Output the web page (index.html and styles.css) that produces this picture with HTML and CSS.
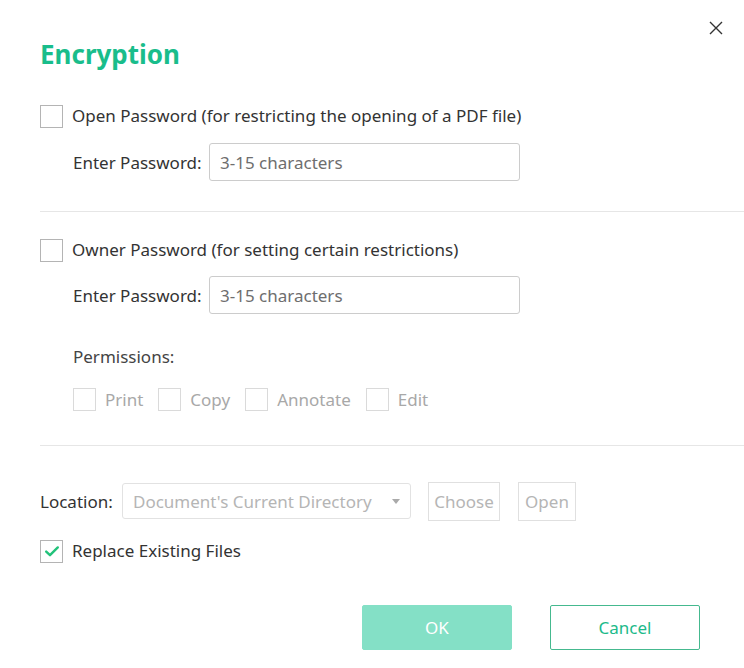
FILE: index.html
```html
<!DOCTYPE html>
<html lang="en">
<head>
<meta charset="utf-8">
<title>Encryption</title>
<link rel="stylesheet" href="styles.css">
</head>
<body>
<div class="dialog">
  <button class="close" aria-label="Close">
    <svg width="14" height="14" viewBox="0 0 14 14"><path d="M1 1L13 13M13 1L1 13" stroke="#333" stroke-width="1.4" fill="none"/></svg>
  </button>
  <h1 class="title">Encryption</h1>

  <section class="section sec-open">
    <label class="check-row">
      <span class="box"></span>
      <span class="check-text">Open Password (for restricting the opening of a PDF file)</span>
    </label>
    <div class="field-row">
      <span class="field-label">Enter Password:</span>
      <div class="input">3-15 characters</div>
    </div>
  </section>

  <div class="divider div-1"></div>

  <section class="section sec-owner">
    <label class="check-row">
      <span class="box"></span>
      <span class="check-text">Owner Password (for setting certain restrictions)</span>
    </label>
    <div class="field-row">
      <span class="field-label">Enter Password:</span>
      <div class="input">3-15 characters</div>
    </div>
    <div class="perm-label">Permissions:</div>
    <div class="perm-row">
      <span class="perm"><span class="box disabled"></span><span>Print</span></span>
      <span class="perm"><span class="box disabled"></span><span>Copy</span></span>
      <span class="perm"><span class="box disabled"></span><span>Annotate</span></span>
      <span class="perm"><span class="box disabled"></span><span>Edit</span></span>
    </div>
  </section>

  <div class="divider div-2"></div>

  <div class="location-row">
    <span class="loc-label">Location:</span>
    <div class="select">
      <span>Document's Current Directory</span>
      <svg class="caret" width="8" height="5" viewBox="0 0 8 5"><path d="M0 0H8L4 5Z" fill="#aaa"/></svg>
    </div>
    <span class="btn-small choose">Choose</span>
    <span class="btn-small open">Open</span>
  </div>

  <label class="check-row replace">
    <span class="box checked">
      <svg width="16" height="13" viewBox="0 0 16 13"><path d="M2.2 6.6L6 10.2L13.8 2.4" stroke="#22c27a" stroke-width="2.4" fill="none" stroke-linecap="round" stroke-linejoin="round"/></svg>
    </span>
    <span class="check-text">Replace Existing Files</span>
  </label>

  <div class="actions">
    <button class="btn ok">OK</button>
    <button class="btn cancel">Cancel</button>
  </div>
</div>
</body>
</html>
```

FILE: styles.css
```css
* { box-sizing: border-box; }
html, body {
  margin: 0;
  padding: 0;
  background: #ffffff;
}
body {
  font-family: "Noto Sans", "Open Sans", sans-serif;
  font-size: 17px;
  color: #333333;
}
.dialog {
  position: relative;
  width: 744px;
  height: 668px;
  padding-left: 40px;
  padding-top: 36px;
}
.close {
  position: absolute;
  top: 21px;
  left: 709px;
  width: 14px;
  height: 14px;
  padding: 0;
  border: 0;
  background: none;
  display: flex;
}
.title {
  margin: 0;
  height: 36px;
  line-height: 36px;
  font-size: 26px;
  font-weight: 700;
  color: #19bd8b;
}
.section { display: flex; flex-direction: column; }
.sec-open { margin-top: 32px; }
.check-row {
  display: flex;
  align-items: center;
  height: 24px;
  gap: 9px;
}
.box {
  width: 23px;
  height: 23px;
  border: 1.5px solid #b4b4b4;
  background: #fff;
  flex: none;
  display: flex;
  align-items: center;
  justify-content: center;
}
.box.disabled { border-color: #dadada; }
.check-text { line-height: 24px; }
.field-row {
  display: flex;
  align-items: center;
  margin-top: 15px;
  padding-left: 33px;
}
.field-label {
  width: 136px;
  flex: none;
}
.input {
  width: 311px;
  height: 38px;
  border: 1px solid #cccccc;
  border-radius: 3px;
  padding-left: 10px;
  display: flex;
  align-items: center;
  color: #6e6e6e;
}
.divider {
  height: 1px;
  background: #e6e6e6;
}
.div-1 { margin-top: 30px; }
.sec-owner { margin-top: 26px; }
.sec-owner .field-row { margin-top: 14px; }
.perm-label {
  margin-top: 31px;
  padding-left: 33px;
  line-height: 24px;
  color: #444;
}
.perm-row {
  margin-top: 19px;
  padding-left: 33px;
  display: flex;
  gap: 15px;
  height: 23px;
  align-items: center;
}
.perm {
  display: flex;
  align-items: center;
  gap: 9px;
  color: #a8a8a8;
}
.div-2 { margin-top: 34px; }
.location-row {
  margin-top: 36px;
  display: flex;
  align-items: center;
  height: 38px;
}
.loc-label { width: 82px; flex: none; }
.select {
  width: 289px;
  height: 36px;
  border: 1px solid #e2e2e2;
  border-radius: 3px;
  padding: 0 10px;
  display: flex;
  align-items: center;
  justify-content: space-between;
  color: #b5b5b5;
}
.btn-small {
  height: 39px;
  border: 1px solid #e0e0e0;
  color: #b5b5b5;
  display: flex;
  align-items: center;
  justify-content: center;
}
.choose { width: 72px; margin-left: 17px; }
.open { width: 58px; margin-left: 18px; }
.replace { margin-top: 19px; }
.actions {
  margin-top: 42px;
  display: flex;
  justify-content: flex-end;
  gap: 38px;
  padding-right: 44px;
}
.btn {
  width: 150px;
  height: 45px;
  font-family: inherit;
  font-size: 17px;
  border-radius: 2px;
}
.ok {
  background: #84e0c6;
  border: 1px solid #84e0c6;
  color: #ffffff;
}
.cancel {
  background: #ffffff;
  border: 1px solid #45b98f;
  color: #1cba8a;
}
```
